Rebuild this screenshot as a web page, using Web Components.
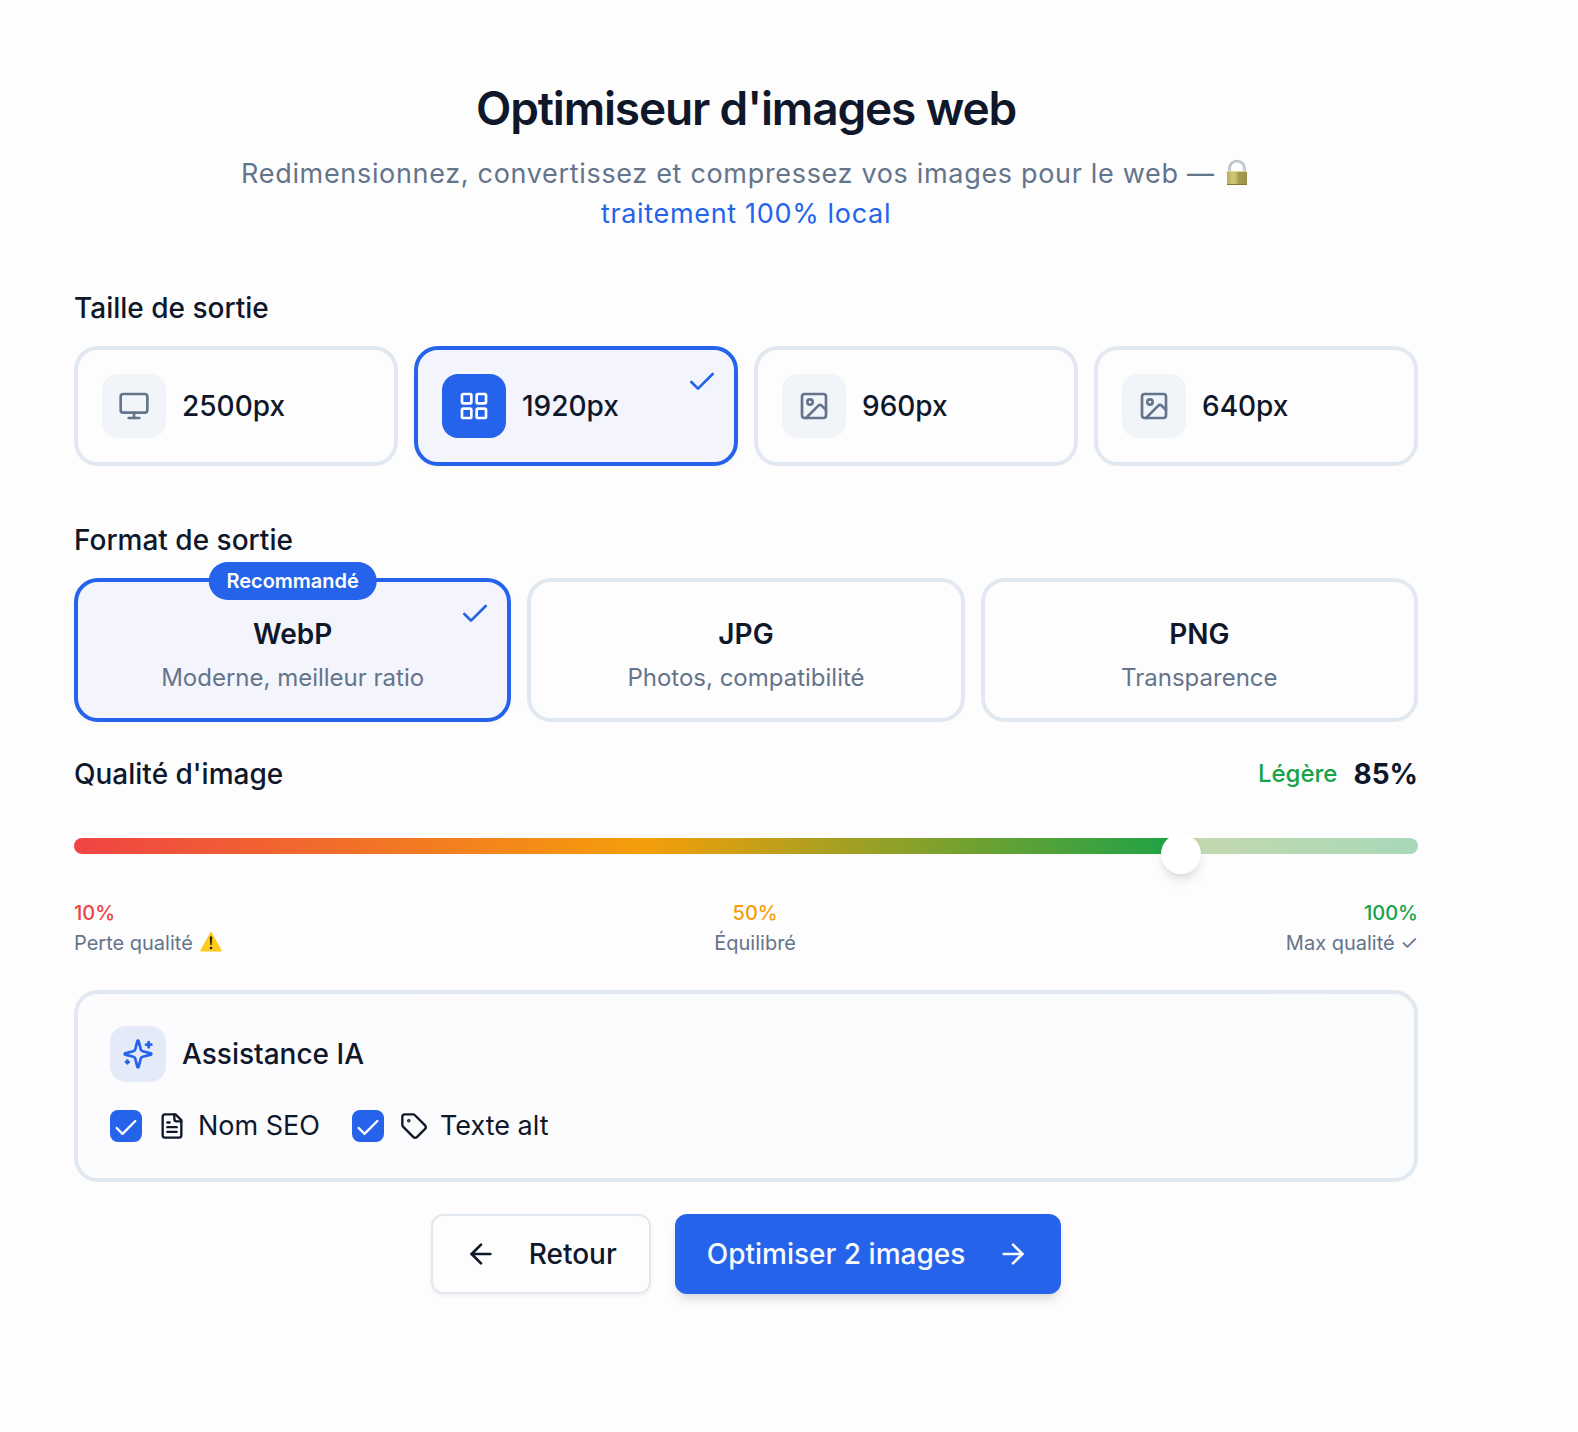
<!DOCTYPE html>
<html lang="fr">
<head>
<meta charset="utf-8">
<meta name="viewport" content="width=device-width, initial-scale=1">
<title>Optimiseur d'images web</title>
<style>
  :root {
    --bg: #fdfdfd;
    --ink: #0f172a;
    --muted: #64748b;
    --line: #e2e8f0;
    --soft: #f1f5f9;
    --primary: #2563eb;
    --tint: #f3f4fc;
    --red: #ef4444;
    --amber: #f59e0b;
    --green: #16a34a;
  }
  body {
    margin: 0;
    background: var(--bg);
    color: var(--ink);
    font-family: Inter, "Liberation Sans", sans-serif;
    font-size: 28px;
    line-height: 40px;
  }
</style>
</head>
<body>
<image-optimizer></image-optimizer>

<script>
const ICONS = {
  monitor: '<rect width="20" height="14" x="2" y="3" rx="2"/><line x1="8" x2="16" y1="21" y2="21"/><line x1="12" x2="12" y1="17" y2="21"/>',
  grid: '<rect width="7" height="7" x="3" y="3" rx="1"/><rect width="7" height="7" x="14" y="3" rx="1"/><rect width="7" height="7" x="14" y="14" rx="1"/><rect width="7" height="7" x="3" y="14" rx="1"/>',
  image: '<rect width="18" height="18" x="3" y="3" rx="2"/><circle cx="9" cy="9" r="2"/><path d="m21 15-3.086-3.086a2 2 0 0 0-2.828 0L6 21"/>',
  check: '<path d="M20 6 9 17l-5-5"/>',
  sparkles: '<path d="M9.937 15.500A2 2 0 0 0 8.500 14.063l-6.135-1.582a.5.5 0 0 1 0-.962L8.500 9.936A2 2 0 0 0 9.937 8.500l1.582-6.135a.5.5 0 0 1 .963 0L14.063 8.500A2 2 0 0 0 15.500 9.937l6.135 1.581a.5.5 0 0 1 0 .964L15.500 14.063a2 2 0 0 0-1.437 1.437l-1.582 6.135a.5.5 0 0 1-.963 0z"/><path d="M20 3v4"/><path d="M22 5h-4"/><path d="M4 17v2"/><path d="M5 18H3"/>',
  file: '<path d="M15 2H6a2 2 0 0 0-2 2v16a2 2 0 0 0 2 2h12a2 2 0 0 0 2-2V7Z"/><path d="M14 2v4a2 2 0 0 0 2 2h4"/><path d="M10 9H8"/><path d="M16 13H8"/><path d="M16 17H8"/>',
  tag: '<path d="M12.586 2.586A2 2 0 0 0 11.172 2H4a2 2 0 0 0-2 2v7.172a2 2 0 0 0 .586 1.414l8.704 8.704a2.426 2.426 0 0 0 3.42 0l6.58-6.58a2.426 2.426 0 0 0 0-3.42z"/><circle cx="7.5" cy="7.5" r=".5" fill="currentColor"/>',
  left: '<path d="m12 19-7-7 7-7"/><path d="M19 12H5"/>',
  right: '<path d="M5 12h14"/><path d="m12 5 7 7-7 7"/>'
};

class LineIcon extends HTMLElement {
  connectedCallback() {
    if (this.shadowRoot) return;
    this.attachShadow({ mode: 'open' }).innerHTML = `
      <style>
        :host { display: block; flex: none; width: 32px; height: 32px; }
        svg { display: block; width: 100%; height: 100%; }
      </style>
      <svg viewBox="0 0 24 24" fill="none" stroke="currentColor" stroke-width="2" stroke-linecap="round" stroke-linejoin="round" aria-hidden="true">${ICONS[this.getAttribute('name')]}</svg>`;
  }
}
customElements.define('line-icon', LineIcon);

class LockEmoji extends HTMLElement {
  connectedCallback() {
    if (this.shadowRoot) return;
    this.attachShadow({ mode: 'open' }).innerHTML = `
      <style>
        :host { display: inline-block; width: 28px; height: 28px; vertical-align: -4px; }
        svg { display: block; width: 100%; height: 100%; }
      </style>
      <svg viewBox="0 0 28 28" role="img" aria-label="cadenas">
        <defs>
          <linearGradient id="b" x1="0" x2="1" y1="0" y2="0">
            <stop offset="0" stop-color="#b9ad58"/><stop offset=".3" stop-color="#cfc878"/>
            <stop offset=".5" stop-color="#c0b764"/><stop offset=".55" stop-color="#a59d52"/><stop offset="1" stop-color="#9c934c"/>
          </linearGradient>
        </defs>
        <path d="M6.500 14V9.500a7.500 7.500 0 0 1 15 0V14" fill="none" stroke="#a9b4bd" stroke-width="2.600"/>
        <path d="M6.500 13V9.500a7.500 7.500 0 0 1 15 0V13" fill="none" stroke="#d3dbe2" stroke-width="1"/>
        <rect x="4" y="12" width="20" height="14" rx="1" fill="url(#b)"/>
        <rect x="4" y="12" width="20" height="1" fill="#ddd795"/>
        <rect x="4" y="25" width="20" height="1" fill="#857a35"/>
      </svg>`;
  }
}
customElements.define('lock-emoji', LockEmoji);

class WarningEmoji extends HTMLElement {
  connectedCallback() {
    if (this.shadowRoot) return;
    this.attachShadow({ mode: 'open' }).innerHTML = `
      <style>
        :host { display: inline-block; width: 26px; height: 22px; vertical-align: -3px; }
        svg { display: block; width: 100%; height: 100%; }
      </style>
      <svg viewBox="-1 0 26 22" role="img" aria-label="attention">
        <path d="M12 1.800 22 19.800H2Z" fill="#fdcb1c" stroke="#fdcb1c" stroke-width="1.600" stroke-linejoin="round"/>
        <path d="M10.800 6.500a1.200 1.200 0 0 1 2.400 0L12.700 14h-1.400Z" fill="#2b2618"/>
        <circle cx="12" cy="17" r="1.300" fill="#2b2618"/>
      </svg>`;
  }
}
customElements.define('warning-emoji', WarningEmoji);

class PageHeader extends HTMLElement {
  connectedCallback() {
    if (this.shadowRoot) return;
    this.attachShadow({ mode: 'open' }).innerHTML = `
      <style>
        :host { display: flex; flex-direction: column; align-items: center; gap: 16px; text-align: center; }
        h1 { margin: 0; font-size: 46px; line-height: 60px; font-weight: 600; letter-spacing: -0.025em; }
        p { margin: 0; max-width: 1040px; font-size: 27px; color: var(--muted); letter-spacing: 0.025em; }
        ::slotted(em) { font-style: normal; color: var(--primary); white-space: nowrap; }
      </style>
      <h1><slot name="title"></slot></h1>
      <p><slot></slot></p>`;
  }
}
customElements.define('page-header', PageHeader);

class OptionSection extends HTMLElement {
  connectedCallback() {
    if (this.shadowRoot) return;
    this.attachShadow({ mode: 'open' }).innerHTML = `
      <style>
        :host { display: flex; flex-direction: column; gap: 18px; }
        h2 { margin: 0; font-size: 28px; line-height: 40px; font-weight: 500; }
        .grid { display: grid; grid-template-columns: repeat(${this.getAttribute('columns')}, minmax(0, 1fr)); gap: 16px; }
      </style>
      <h2 id="h">${this.getAttribute('heading')}</h2>
      <div class="grid" role="group" aria-labelledby="h"><slot></slot></div>`;
  }
}
customElements.define('option-section', OptionSection);

const CARD = `
  :host { display: block; }
  button {
    position: relative; box-sizing: border-box; width: 100%; margin: 0; cursor: pointer;
    border: 4px solid var(--line); border-radius: 24px; background: var(--bg);
    font: inherit; color: inherit;
  }
  :host([selected]) button { border-color: var(--primary); background: var(--tint); box-shadow: 0 2px 4px rgb(0 0 0 / 4%); }
  .check { position: absolute; top: 16px; right: 16px; color: var(--primary); display: none; }
  :host([selected]) .check { display: block; }
`;

class SizeOption extends HTMLElement {
  connectedCallback() {
    if (this.shadowRoot) return;
    this.attachShadow({ mode: 'open' }).innerHTML = `
      <style>
        ${CARD}
        button { display: flex; align-items: center; gap: 16px; padding: 24px; font-weight: 500; text-align: left; }
        .tile { display: grid; place-items: center; flex: none; width: 64px; height: 64px; border-radius: 16px; background: var(--soft); color: var(--muted); }
        :host([selected]) .tile { background: var(--primary); color: #fff; }
      </style>
      <button type="button" aria-pressed="${this.hasAttribute('selected')}">
        <span class="tile"><line-icon name="${this.getAttribute('icon')}"></line-icon></span>
        <span><slot></slot></span>
        <line-icon class="check" name="check"></line-icon>
      </button>`;
  }
}
customElements.define('size-option', SizeOption);

class FormatOption extends HTMLElement {
  connectedCallback() {
    if (this.shadowRoot) return;
    const badge = this.getAttribute('badge');
    this.attachShadow({ mode: 'open' }).innerHTML = `
      <style>
        ${CARD}
        button { display: flex; flex-direction: column; align-items: center; gap: 8px; padding: 32px 24px 24px; }
        .name { font-weight: 600; }
        .note { font-size: 24px; line-height: 32px; color: var(--muted); }
        .badge {
          position: absolute; top: -20px; left: 50%; transform: translateX(-50%);
          padding: 4px 18px; border-radius: 20px; background: var(--primary); color: #fff;
          font-size: 20px; line-height: 30px; font-weight: 600;
        }
      </style>
      <button type="button" aria-pressed="${this.hasAttribute('selected')}">
        ${badge ? `<span class="badge">${badge}</span>` : ''}
        <span class="name"><slot></slot></span>
        <span class="note"><slot name="note"></slot></span>
        <line-icon class="check" name="check"></line-icon>
      </button>`;
  }
}
customElements.define('format-option', FormatOption);

class QualitySlider extends HTMLElement {
  connectedCallback() {
    if (this.shadowRoot) return;
    this.attachShadow({ mode: 'open' }).innerHTML = `
      <style>
        :host { display: block; --fill: 83.33%; }
        .head { display: flex; justify-content: space-between; }
        label { font-weight: 500; }
        .value { display: flex; gap: 16px; font-weight: 700; }
        .level { font-size: 24px; font-weight: 500; color: var(--green); }
        input {
          display: block; appearance: none; box-sizing: border-box; width: 100%; height: 16px; margin: 44px 0; border-radius: 8px;
          background:
            linear-gradient(90deg, var(--red), var(--amber) 51%, var(--green)) 0 0 / var(--fill) 100% no-repeat,
            linear-gradient(90deg, #f9b4b4, #fbd89d 50%, #a8d8b8);
        }
        input::-webkit-slider-runnable-track { height: 16px; background: none; }
        input::-webkit-slider-thumb {
          appearance: none; width: 40px; height: 40px; margin-top: -4px; border: 0; border-radius: 50%;
          background: #fff; box-shadow: 0 8px 12px -2px rgb(0 0 0 / 10%), 0 4px 8px -4px rgb(0 0 0 / 10%);
        }
        .scale { display: flex; justify-content: space-between; font-size: 20px; line-height: 30px; color: var(--muted); }
        .scale div { display: flex; flex-direction: column; }
        .mid { align-items: center; }
        .end { align-items: flex-end; }
        b { font-weight: 500; }
      </style>
      <div class="head">
        <label for="q">Qualité d'image</label>
        <span class="value"><span class="level">Légère</span><span class="pct">85%</span></span>
      </div>
      <input id="q" type="range" min="10" max="100" value="85">
      <div class="scale">
        <div><b style="color:var(--red)">10%</b><span>Perte qualité <warning-emoji></warning-emoji></span></div>
        <div class="mid"><b style="color:var(--amber)">50%</b><span>Équilibré</span></div>
        <div class="end"><b style="color:var(--green)">100%</b><span>Max qualité ✓</span></div>
      </div>`;
    const input = this.shadowRoot.querySelector('input');
    input.addEventListener('input', () => {
      this.style.setProperty('--fill', (input.value - 10) / 0.9 + '%');
      this.shadowRoot.querySelector('.pct').textContent = input.value + '%';
    });
  }
}
customElements.define('quality-slider', QualitySlider);

class CheckOption extends HTMLElement {
  connectedCallback() {
    if (this.shadowRoot) return;
    this.attachShadow({ mode: 'open' }).innerHTML = `
      <style>
        :host { display: block; }
        label { display: flex; align-items: center; gap: 16px; cursor: pointer; }
        .box { display: grid; width: 32px; height: 32px; }
        input, .box line-icon { grid-area: 1 / 1; }
        input { appearance: none; width: 32px; height: 32px; margin: 0; border-radius: 8px; background: #fff; border: 2px solid var(--primary); }
        input:checked { background: var(--primary); }
        .box line-icon { width: 28px; height: 28px; place-self: end center; color: #fff; pointer-events: none; }
        .text { display: flex; align-items: center; gap: 12px; font-size: 27px; }
        .text line-icon { width: 28px; height: 28px; }
      </style>
      <label>
        <span class="box"><input type="checkbox" checked><line-icon name="check"></line-icon></span>
        <span class="text"><line-icon name="${this.getAttribute('icon')}"></line-icon><slot></slot></span>
      </label>`;
  }
}
customElements.define('check-option', CheckOption);

class AssistPanel extends HTMLElement {
  connectedCallback() {
    if (this.shadowRoot) return;
    this.attachShadow({ mode: 'open' }).innerHTML = `
      <style>
        :host {
          display: flex; flex-direction: column; gap: 24px; padding: 32px;
          border: 4px solid var(--line); border-radius: 24px; background: linear-gradient(135deg, #fcfcfe, #fafbfc);
        }
        .head { display: flex; align-items: center; gap: 16px; }
        .tile { display: grid; place-items: center; width: 56px; height: 56px; border-radius: 16px; background: #e5eaf9; color: var(--primary); }
        h2 { margin: 0; font-size: 28px; line-height: 40px; font-weight: 500; }
        .row { display: flex; flex-wrap: wrap; gap: 32px; }
      </style>
      <div class="head">
        <span class="tile"><line-icon name="sparkles"></line-icon></span>
        <h2><slot name="title"></slot></h2>
      </div>
      <div class="row"><slot></slot></div>`;
  }
}
customElements.define('assist-panel', AssistPanel);

class ActionButton extends HTMLElement {
  connectedCallback() {
    if (this.shadowRoot) return;
    this.attachShadow({ mode: 'open' }).innerHTML = `
      <style>
        :host { display: block; }
        button {
          display: flex; align-items: center; gap: 32px; margin: 0; cursor: pointer;
          padding: 18px 32px; border: 2px solid var(--line); border-radius: 12px; background: var(--bg);
          box-shadow: 0 2px 4px rgb(0 0 0 / 5%); font: inherit; font-weight: 500; color: inherit;
        }
        :host([primary]) button {
          padding: 20px 32px; border: 0; background: var(--primary); color: #f8fafc;
          box-shadow: 0 8px 12px -2px rgb(0 0 0 / 10%), 0 4px 8px -4px rgb(0 0 0 / 10%);
        }
      </style>
      <button type="button"><slot name="before"></slot><span><slot></slot></span><slot name="after"></slot></button>`;
  }
}
customElements.define('action-button', ActionButton);

class ImageOptimizer extends HTMLElement {
  connectedCallback() {
    if (this.shadowRoot) return;
    this.attachShadow({ mode: 'open' }).innerHTML = `
      <style>
        :host { display: block; }
        main { display: flex; flex-direction: column; gap: 32px; padding: 78px 160px 78px 74px; }
        .options { display: flex; flex-direction: column; gap: 54px; padding-top: 22px; }
        .actions { display: flex; justify-content: center; gap: 24px; }
      </style>
      <main>
        <page-header>
          <span slot="title">Optimiseur d'images web</span>
          Redimensionnez, convertissez et compressez vos images pour le web — <lock-emoji></lock-emoji> <em>traitement 100% local</em>
        </page-header>
        <div class="options">
          <option-section heading="Taille de sortie" columns="4">
            <size-option icon="monitor">2500px</size-option>
            <size-option icon="grid" selected>1920px</size-option>
            <size-option icon="image">960px</size-option>
            <size-option icon="image">640px</size-option>
          </option-section>
          <option-section heading="Format de sortie" columns="3">
            <format-option badge="Recommandé" selected>WebP<span slot="note">Moderne, meilleur ratio</span></format-option>
            <format-option>JPG<span slot="note">Photos, compatibilité</span></format-option>
            <format-option>PNG<span slot="note">Transparence</span></format-option>
          </option-section>
        </div>
        <quality-slider></quality-slider>
        <assist-panel>
          <span slot="title">Assistance IA</span>
          <check-option icon="file">Nom SEO</check-option>
          <check-option icon="tag">Texte alt</check-option>
        </assist-panel>
        <div class="actions">
          <action-button><line-icon slot="before" name="left"></line-icon>Retour</action-button>
          <action-button primary>Optimiser 2 images<line-icon slot="after" name="right"></line-icon></action-button>
        </div>
      </main>`;
  }
}
customElements.define('image-optimizer', ImageOptimizer);
</script>
</body>
</html>
